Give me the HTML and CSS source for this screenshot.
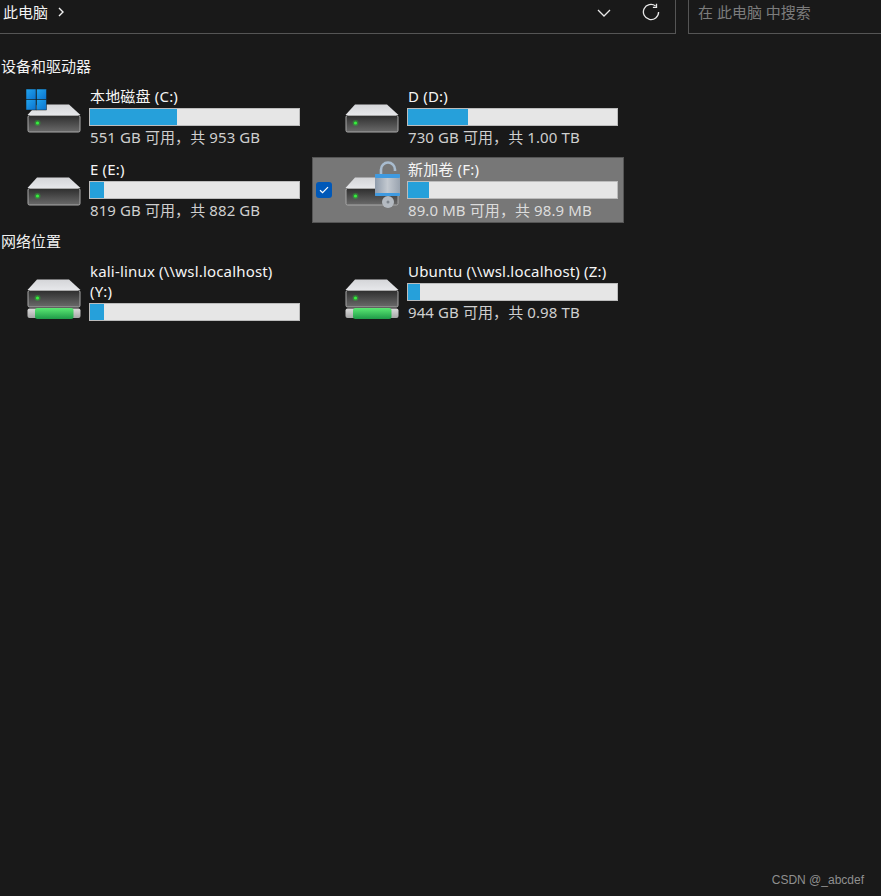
FILE: index.html
```html
<!DOCTYPE html>
<html lang="zh-CN">
<head>
	<meta charset="UTF-8">
	<title>此电脑</title>
	<link rel="stylesheet" href="styles.css">
</head>
<body>
	<svg class="defs" width="0" height="0">
		<defs>
			<linearGradient id="bodyGrad" x1="0" y1="0" x2="0" y2="1">
				<stop offset="0" stop-color="#2e2e2e"/>
				<stop offset="1" stop-color="#6a6a6a"/>
			</linearGradient>
			<linearGradient id="topGrad" x1="0" y1="0" x2="0" y2="1">
				<stop offset="0" stop-color="#d4d5d8"/>
				<stop offset="1" stop-color="#e6e7ea"/>
			</linearGradient>
			<linearGradient id="linkGrad" x1="0" y1="0" x2="0" y2="1">
				<stop offset="0" stop-color="#5be873"/>
				<stop offset="1" stop-color="#1f9a48"/>
			</linearGradient>
			<linearGradient id="capGrad" x1="0" y1="0" x2="0" y2="1">
				<stop offset="0" stop-color="#dcdcdc"/>
				<stop offset="1" stop-color="#a6a6a6"/>
			</linearGradient>
			<linearGradient id="winGrad" x1="0" y1="0" x2="1" y2="1">
				<stop offset="0" stop-color="#22a5ee"/>
				<stop offset="1" stop-color="#0a72cf"/>
			</linearGradient>
			<linearGradient id="lockGrad" x1="0" y1="0" x2="1" y2="0">
				<stop offset="0" stop-color="#8e9bab"/>
				<stop offset="0.5" stop-color="#c3c9d0"/>
				<stop offset="1" stop-color="#99a3af"/>
			</linearGradient>
			<symbol id="drive" viewBox="0 0 56 56">
				<path d="M11 16.5H43L54.5 27H1.5Z" fill="url(#topGrad)"/>
				<rect x="2" y="27.5" width="52" height="16.5" rx="1.5" fill="url(#bodyGrad)" stroke="#a9a9a9"/>
				<circle cx="11.5" cy="35" r="3" fill="#1fd32a" opacity=".35"/>
				<circle cx="11.5" cy="35" r="1.6" fill="#35f03c"/>
			</symbol>
			<symbol id="link" viewBox="0 0 56 56">
				<rect x="1.5" y="45.5" width="53" height="9.5" rx="2" fill="url(#capGrad)"/>
				<rect x="9" y="45" width="38.5" height="11" rx="2.5" fill="url(#linkGrad)"/>
			</symbol>
		</defs>
	</svg>

	<header class="toolbar">
		<div class="address">
			<span class="crumb">此电脑</span>
			<svg class="crumb-arrow" width="8" height="10" viewBox="0 0 8 10"><path d="M2 1l4 4-4 4" fill="none" stroke="#f2f2f2" stroke-width="1.4"/></svg>
			<svg class="drop" width="14" height="10" viewBox="0 0 14 10"><path d="M1 2l6 6 6-6" fill="none" stroke="#e8e8e8" stroke-width="1.3"/></svg>
			<svg class="refresh" width="18" height="18" viewBox="0 0 18 18"><path d="M13.6 2.9A7.6 7.6 0 1 0 16.6 9" fill="none" stroke="#e8e8e8" stroke-width="1.3"/><path d="M14.5 .8v3.6h-3.6" fill="none" stroke="#e8e8e8" stroke-width="1.3"/></svg>
		</div>
		<div class="search">在 此电脑 中搜索</div>
	</header>

	<main class="content">
		<h2 class="group">设备和驱动器</h2>
		<div class="tiles">
			<div class="tile">
				<svg class="icon" width="56" height="56" viewBox="0 0 56 56">
					<use href="#drive"/>
					<g fill="url(#winGrad)" stroke="#16181a" stroke-width=".5">
						<rect x="0" y="1" width="10" height="10.5"/>
						<rect x="10.5" y="1" width="10" height="10.5"/>
						<rect x="0" y="11.5" width="10" height="10.5"/>
						<rect x="10.5" y="11.5" width="10" height="10.5"/>
					</g>
				</svg>
				<div class="info">
					<div class="name">本地磁盘 (C:)</div>
					<div class="bar"><div class="fill" style="width:41.5%"></div></div>
					<div class="stat">551 GB 可用，共 953 GB</div>
				</div>
			</div>
			<div class="tile">
				<svg class="icon" width="56" height="56" viewBox="0 0 56 56"><use href="#drive"/></svg>
				<div class="info">
					<div class="name">D (D:)</div>
					<div class="bar"><div class="fill" style="width:28.5%"></div></div>
					<div class="stat">730 GB 可用，共 1.00 TB</div>
				</div>
			</div>
			<div class="tile">
				<svg class="icon" width="56" height="56" viewBox="0 0 56 56"><use href="#drive"/></svg>
				<div class="info">
					<div class="name">E (E:)</div>
					<div class="bar"><div class="fill" style="width:6.6%"></div></div>
					<div class="stat">819 GB 可用，共 882 GB</div>
				</div>
			</div>
			<div class="tile selected">
				<span class="check"><svg width="10" height="8" viewBox="0 0 10 8"><path d="M1 4.2l2.6 2.5L9 1.2" fill="none" stroke="#fff" stroke-width="1.2"/></svg></span>
				<svg class="icon" width="56" height="56" viewBox="0 0 56 56">
					<use href="#drive"/>
					<path d="M37 14V8.5a7 7 0 0 1 14 0V10" fill="none" stroke="#a9bccf" stroke-width="2.6"/>
					<rect x="31" y="13" width="25" height="22" rx="1.5" fill="url(#lockGrad)"/>
					<rect x="31" y="13" width="25" height="4" rx="1" fill="#3f9ae0"/>
					<rect x="31" y="32" width="25" height="3" rx="1" fill="#3f9ae0"/>
					<circle cx="44" cy="41" r="6" fill="#b4bac1"/>
					<circle cx="44" cy="41" r="1.5" fill="#7d848c"/>
				</svg>
				<div class="info">
					<div class="name">新加卷 (F:)</div>
					<div class="bar"><div class="fill" style="width:10%"></div></div>
					<div class="stat">89.0 MB 可用，共 98.9 MB</div>
				</div>
			</div>
		</div>

		<h2 class="group">网络位置</h2>
		<div class="tiles">
			<div class="tile">
				<svg class="icon" width="56" height="56" viewBox="0 0 56 56"><use href="#drive"/><use href="#link"/></svg>
				<div class="info">
					<div class="name">kali-linux (\\wsl.localhost)<br>(Y:)</div>
					<div class="bar"><div class="fill" style="width:6.6%"></div></div>
				</div>
			</div>
			<div class="tile">
				<svg class="icon" width="56" height="56" viewBox="0 0 56 56"><use href="#drive"/><use href="#link"/></svg>
				<div class="info">
					<div class="name">Ubuntu (\\wsl.localhost) (Z:)</div>
					<div class="bar"><div class="fill" style="width:5.7%"></div></div>
					<div class="stat">944 GB 可用，共 0.98 TB</div>
				</div>
			</div>
		</div>
	</main>

	<div class="watermark">CSDN @_abcdef</div>
</body>
</html>
```

FILE: styles.css
```css
*{
	margin:0;
	padding:0;
	box-sizing:border-box;
}
html,body{
	height:100%;
	overflow:hidden;
}
body{
	background:#191919;
	color:#f2f2f2;
	font-family:"Noto Sans","Noto Sans CJK SC",sans-serif;
	font-size:15px;
	line-height:20px;
}
.defs{
	position:absolute;
}

/* top bar */
.toolbar{
	display:flex;
	gap:12px;
	height:34px;
}
.address{
	width:676px;
	display:flex;
	align-items:center;
	padding:0 15px 0 3px;
	border-right:1px solid #555;
	border-bottom:1px solid #555;
}
.crumb{
	color:#f2f2f2;
	margin-top:-10px;
}
.crumb-arrow{
	margin:-9px 0 0 9px;
}
.drop{
	margin:-8px 0 0 auto;
}
.refresh{
	margin:-9px 0 0 31px;
}
.search{
	flex:1;
	padding:2px 0 0 9px;
	color:#7c7c7c;
	border-left:1px solid #555;
	border-bottom:1px solid #555;
}

/* groups */
.content{
	padding:22px 0 0 1px;
}
.group{
	font-size:15px;
	font-weight:normal;
	color:#f2f2f2;
	margin-bottom:8px;
}
.tiles{
	display:grid;
	grid-template-columns:312px 312px;
	column-gap:6px;
	row-gap:7px;
	margin:0 0 8px -7px;
}
.tile{
	position:relative;
	display:flex;
	gap:7px;
	padding:3px 5px 2px 31px;
	border:1px solid transparent;
}
.tile.selected{
	background:#777;
	border-color:#555;
}
.check{
	position:absolute;
	left:3px;
	top:24px;
	width:16px;
	height:16px;
	display:flex;
	align-items:center;
	justify-content:center;
	background:#0058b8;
	border-radius:3px;
}
.icon{
	flex:none;
}
.info{
	flex:1;
	margin-top:-2px;
}
.name{
	padding-left:1px;
	color:#f5f5f5;
	letter-spacing:.18px;
}
.stat{
	margin-top:1px;
	padding-left:1px;
	color:#cfcfcf;
	letter-spacing:.1px;
}
.selected .stat{
	color:#dcdcdc;
}
.bar{
	height:18px;
	margin:2px 0 0;
	background:#e6e6e6;
	border:1px solid #bcbcbc;
}
.fill{
	height:100%;
	background:#26a0da;
}
.watermark{
	position:absolute;
	right:17px;
	bottom:9px;
	font-family:"Liberation Sans",sans-serif;
	font-size:12px;
	line-height:14px;
	color:#8f8f8f;
}
```
